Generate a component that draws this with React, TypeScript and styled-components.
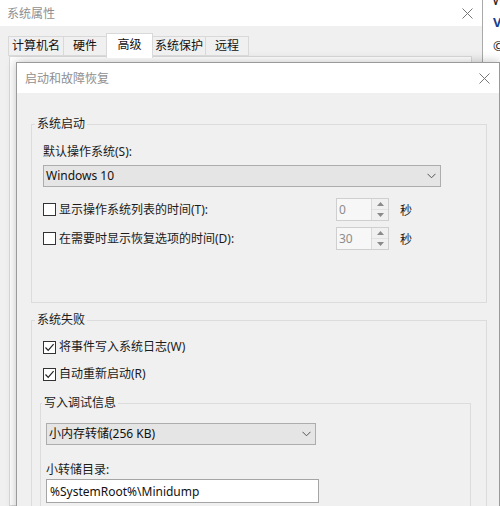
import React from 'react';
import styled, { createGlobalStyle } from 'styled-components';

const GlobalStyle = createGlobalStyle`
  html, body {
    margin: 0;
    padding: 0;
    background: #f0f0f0;
  }
  body {
    font-family: "Noto Sans", "Noto Sans CJK SC", sans-serif;
    font-size: 12px;
    color: #1b1b1b;
  }
  * {
    box-sizing: border-box;
  }
`;

const Desktop = styled.div`
  position: relative;
  width: 500px;
  height: 506px;
  overflow: hidden;
  background: #fff;
`;

/* window peeking out on the right */
const SideWindow = styled.div`
  position: absolute;
  left: 483px;
  top: 0;
  width: 120px;
  height: 506px;
  background: #fff;
  padding-left: 10px;
  display: flex;
  flex-direction: column;
  gap: 4px;
`;

const SideTitle = styled.div`
  margin: -10px 0 0 -1px;
  font-size: 15px;
  line-height: 18px;
  color: #222;
  white-space: nowrap;
`;

const SideLine = styled.div<{ $color: string; $bold?: boolean }>`
  font-size: 13px;
  line-height: 20px;
  color: ${p => p.$color};
  font-weight: ${p => (p.$bold ? 700 : 400)};
  white-space: nowrap;
`;

const BackWindow = styled.div`
  position: absolute;
  left: 0;
  top: 0;
  width: 483px;
  height: 506px;
  background: #f0f0f0;
  border-right: 1px solid #a9a9a9;
  display: flex;
  flex-direction: column;
`;

const TitleBar = styled.div<{ $h: number; $pl: number }>`
  height: ${p => p.$h}px;
  flex-shrink: 0;
  background: #fff;
  display: flex;
  align-items: center;
  justify-content: space-between;
  padding-left: ${p => p.$pl}px;
  color: #8f8f8f;
  font-size: 12px;
`;

const CloseButton = styled.div`
  width: 30px;
  height: 100%;
  display: flex;
  align-items: center;
  justify-content: center;
`;

const TabStrip = styled.div`
  display: flex;
  align-items: flex-end;
  height: 23px;
  margin-top: 7px;
  padding-left: 8px;
  position: relative;
  z-index: 1;
`;

const Tab = styled.div<{ $w: number; $active?: boolean }>`
  width: ${p => p.$w}px;
  height: ${p => (p.$active ? 25 : 20)}px;
  margin-bottom: ${p => (p.$active ? -2 : 0)}px;
  margin-left: -1px;
  background: ${p => (p.$active ? '#fff' : '#f0f0f0')};
  border: 1px solid #d9d9d9;
  border-bottom: ${p => (p.$active ? 'none' : '1px solid #d9d9d9')};
  display: flex;
  justify-content: center;
  align-items: ${p => (p.$active ? 'flex-start' : 'center')};
  padding-top: ${p => (p.$active ? 3 : 0)}px;
  color: #111;
  font-size: 12px;
  line-height: 16px;
  &:first-child {
    margin-left: 0;
  }
`;

const TabPanel = styled.div`
  flex: 1;
  margin: 0 10px 0 9px;
  background: #fff;
  border: 1px solid #d9d9d9;
`;

const Dialog = styled.div`
  position: absolute;
  left: 16px;
  top: 62px;
  width: 484px;
  height: 470px;
  background: #f0f0f0;
  border: 1px solid #9a9a9a;
  box-shadow: 0 0 10px rgba(0, 0, 0, 0.25);
  display: flex;
  flex-direction: column;
`;

const DialogBody = styled.div`
  padding: 23px 12px 0 14px;
  display: flex;
  flex-direction: column;
`;

const Group = styled.fieldset<{ $pl: number; $pr: number; $pt: number; $h: number; $mt?: number }>`
  margin: ${p => p.$mt ?? 0}px 0 0 0;
  border: 1px solid #dcdcdc;
  padding: ${p => p.$pt}px ${p => p.$pr}px 0 ${p => p.$pl}px;
  height: ${p => p.$h}px;
  min-width: 0;
`;

const Legend = styled.legend<{ $ml: number }>`
  padding: 0 2px;
  margin-left: ${p => p.$ml}px;
  line-height: 16px;
  font-size: 12px;
  color: #1b1b1b;
`;

const FieldLabel = styled.div<{ $mt?: number }>`
  line-height: 16px;
  margin-top: ${p => p.$mt ?? 0}px;
`;

const Combo = styled.div<{ $w: number; $mt?: number }>`
  width: ${p => p.$w}px;
  height: 22px;
  margin-top: ${p => p.$mt ?? 0}px;
  background: #e5e5e5;
  border: 1px solid #adadad;
  display: flex;
  align-items: center;
  justify-content: space-between;
  padding: 0 4px 0 2px;
  color: #111;
  line-height: 16px;
`;

const TextInput = styled.div<{ $w: number; $mt?: number }>`
  width: ${p => p.$w}px;
  height: 24px;
  margin-top: ${p => p.$mt ?? 0}px;
  background: #fff;
  border: 1px solid #a5a5a5;
  display: flex;
  align-items: center;
  padding-left: 3px;
  color: #111;
`;

const CheckRow = styled.div<{ $h: number; $mt?: number; $ml?: number }>`
  display: flex;
  align-items: center;
  height: ${p => p.$h}px;
  margin-top: ${p => p.$mt ?? 0}px;
  margin-left: ${p => p.$ml ?? 0}px;
`;

const CheckLabel = styled.label<{ $w?: number }>`
  display: flex;
  align-items: center;
  gap: 3px;
  width: ${p => (p.$w ? `${p.$w}px` : 'auto')};
  line-height: 16px;
  color: #1b1b1b;
`;

const Box = styled.span`
  width: 13px;
  height: 13px;
  border: 1px solid #333;
  background: #fff;
  display: flex;
  align-items: center;
  justify-content: center;
  flex-shrink: 0;
`;

const Spinner = styled.div`
  width: 53px;
  height: 23px;
  border: 1px solid #cfcfcf;
  background: #f7f7f7;
  display: flex;
`;

const SpinValue = styled.div`
  flex: 1;
  padding-left: 2px;
  display: flex;
  align-items: center;
  color: #8c8c8c;
  font-size: 12px;
`;

const SpinButtons = styled.div`
  width: 17px;
  border-left: 1px solid #dadada;
  display: flex;
  flex-direction: column;
`;

const SpinButton = styled.div`
  flex: 1;
  display: flex;
  align-items: center;
  justify-content: center;
  background: #f0f0f0;
  & + & {
    border-top: 1px solid #e2e2e2;
  }
`;

const Unit = styled.span`
  margin-left: 11px;
  color: #1b1b1b;
`;

const CloseIcon = ({ color }: { color: string }) => (
  <svg width="11" height="11" viewBox="0 0 11 11">
    <path d="M0.5 0.5 L10.5 10.5 M10.5 0.5 L0.5 10.5" stroke={color} strokeWidth="1" fill="none" />
  </svg>
);

const Chevron = () => (
  <svg width="9" height="6" viewBox="0 0 9 6">
    <polyline points="0.5,0.8 4.5,4.8 8.5,0.8" stroke="#555" strokeWidth="1" fill="none" />
  </svg>
);

const Tick = () => (
  <svg width="11" height="11" viewBox="0 0 11 11">
    <polyline points="1.5,5.5 4.2,8.4 9.6,2.2" stroke="#222" strokeWidth="1.2" fill="none" />
  </svg>
);

const Arrow = ({ up }: { up?: boolean }) => (
  <svg width="7" height="4" viewBox="0 0 7 4">
    <polygon points={up ? '0,4 7,4 3.5,0' : '0,0 7,0 3.5,4'} fill="#8a8a8a" />
  </svg>
);

const Check = ({ checked }: { checked?: boolean }) => <Box>{checked && <Tick />}</Box>;

const NumberBox = ({ value }: { value: string }) => (
  <Spinner>
    <SpinValue>{value}</SpinValue>
    <SpinButtons>
      <SpinButton><Arrow up /></SpinButton>
      <SpinButton><Arrow /></SpinButton>
    </SpinButtons>
  </Spinner>
);

const tabs = [
  { label: '计算机名', w: 56 },
  { label: '硬件', w: 44 },
  { label: '高级', w: 47, active: true },
  { label: '系统保护', w: 54 },
  { label: '远程', w: 44 },
];

const App: React.FC = () => {
  return (
    <>
      <GlobalStyle />
      <Desktop>
        <SideWindow>
          <SideTitle>Windows 版本</SideTitle>
          <SideLine $color="#1a3f8c" $bold>Version</SideLine>
          <SideLine $color="#222">© Microsoft</SideLine>
        </SideWindow>

        <BackWindow>
          <TitleBar $h={26} $pl={7}>
            <span>系统属性</span>
            <CloseButton><CloseIcon color="#777" /></CloseButton>
          </TitleBar>
          <TabStrip>
            {tabs.map(t => (
              <Tab key={t.label} $w={t.w} $active={t.active}>{t.label}</Tab>
            ))}
          </TabStrip>
          <TabPanel />
        </BackWindow>

        <Dialog>
          <TitleBar $h={30} $pl={8}>
            <span>启动和故障恢复</span>
            <CloseButton><CloseIcon color="#777" /></CloseButton>
          </TitleBar>
          <DialogBody>
            <Group $pl={11} $pr={11} $pt={12} $h={187}>
              <Legend $ml={-8}>系统启动</Legend>
              <FieldLabel>默认操作系统(S):</FieldLabel>
              <Combo $w={398} $mt={5}>
                <span>Windows 10</span>
                <Chevron />
              </Combo>
              <CheckRow $h={23} $mt={11}>
                <CheckLabel $w={293}>
                  <Check />
                  显示操作系统列表的时间(T):
                </CheckLabel>
                <NumberBox value="0" />
                <Unit>秒</Unit>
              </CheckRow>
              <CheckRow $h={23} $mt={6}>
                <CheckLabel $w={293}>
                  <Check />
                  在需要时显示恢复选项的时间(D):
                </CheckLabel>
                <NumberBox value="30" />
                <Unit>秒</Unit>
              </CheckRow>
            </Group>

            <Group $pl={8} $pr={15} $pt={9} $h={260} $mt={9}>
              <Legend $ml={-5}>系统失败</Legend>
              <CheckRow $h={20} $ml={3}>
                <CheckLabel>
                  <Check checked />
                  将事件写入系统日志(W)
                </CheckLabel>
              </CheckRow>
              <CheckRow $h={20} $mt={7} $ml={3}>
                <CheckLabel>
                  <Check checked />
                  自动重新启动(R)
                </CheckLabel>
              </CheckRow>

              <Group $pl={5} $pr={5} $pt={12} $h={200} $mt={11}>
                <Legend $ml={-4}>写入调试信息</Legend>
                <Combo $w={270}>
                  <span>小内存转储(256 KB)</span>
                  <Chevron />
                </Combo>
                <FieldLabel $mt={17}>小转储目录:</FieldLabel>
                <TextInput $w={273} $mt={1}>%SystemRoot%\Minidump</TextInput>
              </Group>
            </Group>
          </DialogBody>
        </Dialog>
      </Desktop>
    </>
  );
};

export default App;
